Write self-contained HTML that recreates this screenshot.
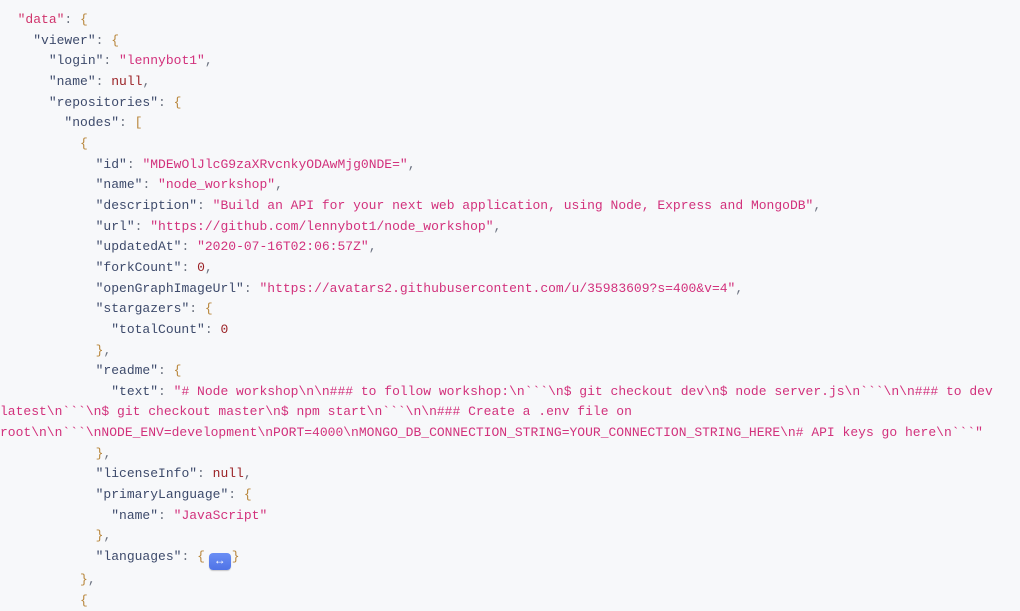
<!DOCTYPE html>
<html><head><meta charset="utf-8"><style>
html,body{margin:0;padding:0;background:#f7f8fa;width:1020px;height:602px;overflow:hidden}
pre{margin:0;position:absolute;left:2px;top:10px;font-family:"Liberation Mono",monospace;font-size:13px;line-height:20.65px;color:#3d4a6b;white-space:pre}
.k{color:#3d4a6b}.dk{color:#d0346c}.s{color:#d2317c}.n{color:#9b2226}.b{color:#b8863b}.p{color:#6b7280}
.btn{display:inline-block;width:22px;height:17px;border-radius:4px;background:linear-gradient(#6b8ff5,#4f73e6);color:#fff;font-size:12px;line-height:17px;text-align:center;vertical-align:-4px;margin:0 1px 0 -4px;box-shadow:0 1px 1px rgba(0,0,0,.2)}
.w{position:relative;left:-2px}
</style></head><body><pre>  <span class="dk">"data"</span><span class="p">: </span><span class="b">{</span>
    <span class="k">"viewer"</span><span class="p">: </span><span class="b">{</span>
      <span class="k">"login"</span><span class="p">: </span><span class="s">"lennybot1"</span><span class="p">,</span>
      <span class="k">"name"</span><span class="p">: </span><span class="n">null</span><span class="p">,</span>
      <span class="k">"repositories"</span><span class="p">: </span><span class="b">{</span>
        <span class="k">"nodes"</span><span class="p">: </span><span class="b">[</span>
          <span class="b">{</span>
            <span class="k">"id"</span><span class="p">: </span><span class="s">"MDEwOlJlcG9zaXRvcnkyODAwMjg0NDE="</span><span class="p">,</span>
            <span class="k">"name"</span><span class="p">: </span><span class="s">"node_workshop"</span><span class="p">,</span>
            <span class="k">"description"</span><span class="p">: </span><span class="s">"Build an API for your next web application, using Node, Express and MongoDB"</span><span class="p">,</span>
            <span class="k">"url"</span><span class="p">: </span><span class="s">"https://github.com/lennybot1/node_workshop"</span><span class="p">,</span>
            <span class="k">"updatedAt"</span><span class="p">: </span><span class="s">"2020-07-16T02:06:57Z"</span><span class="p">,</span>
            <span class="k">"forkCount"</span><span class="p">: </span><span class="n">0</span><span class="p">,</span>
            <span class="k">"openGraphImageUrl"</span><span class="p">: </span><span class="s">"https://avatars2.githubusercontent.com/u/35983609?s=400&amp;v=4"</span><span class="p">,</span>
            <span class="k">"stargazers"</span><span class="p">: </span><span class="b">{</span>
              <span class="k">"totalCount"</span><span class="p">: </span><span class="n">0</span>
            <span class="b">}</span><span class="p">,</span>
            <span class="k">"readme"</span><span class="p">: </span><span class="b">{</span>
              <span class="k">"text"</span><span class="p">: </span><span class="s">"# Node workshop\n\n### to follow workshop:\n&#96;&#96;&#96;\n$ git checkout dev\n$ node server.js\n&#96;&#96;&#96;\n\n### to dev</span>
<span class="s w">latest\n&#96;&#96;&#96;\n$ git checkout master\n$ npm start\n&#96;&#96;&#96;\n\n### Create a .env file on</span>
<span class="s w">root\n\n&#96;&#96;&#96;\nNODE_ENV=development\nPORT=4000\nMONGO_DB_CONNECTION_STRING=YOUR_CONNECTION_STRING_HERE\n# API keys go here\n&#96;&#96;&#96;"</span>
            <span class="b">}</span><span class="p">,</span>
            <span class="k">"licenseInfo"</span><span class="p">: </span><span class="n">null</span><span class="p">,</span>
            <span class="k">"primaryLanguage"</span><span class="p">: </span><span class="b">{</span>
              <span class="k">"name"</span><span class="p">: </span><span class="s">"JavaScript"</span>
            <span class="b">}</span><span class="p">,</span>
            <span class="k">"languages"</span><span class="p">: </span><span class="b">{</span> <span class="btn">↔</span><span class="b">}</span>
          <span class="b">}</span><span class="p">,</span>
          <span class="b">{</span>
</pre></body></html>
